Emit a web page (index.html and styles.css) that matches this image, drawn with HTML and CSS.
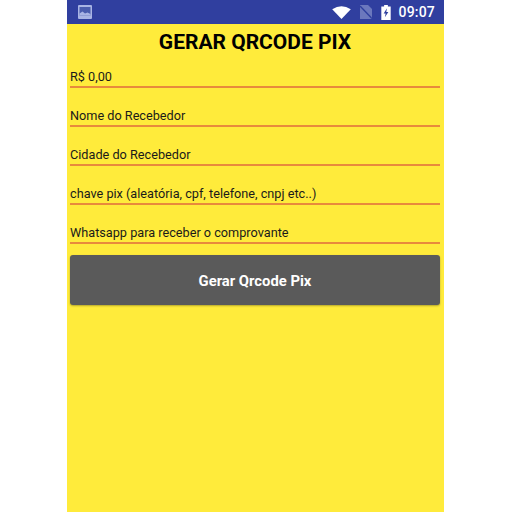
FILE: index.html
```html
<!DOCTYPE html>
<html lang="pt">
<head>
<meta charset="utf-8">
<title>Gerar Qrcode Pix</title>
<link rel="stylesheet" href="styles.css">
</head>
<body>
<div class="phone">
  <div class="status">
    <svg class="pic" viewBox="0 0 14 14"><rect x="0" y="0" width="14" height="14" rx="1" fill="#a9b4e4"/><rect x="1.5" y="2" width="11" height="8.5" fill="#4a5cae"/><path d="M1.5 10.5 L1.5 8.5 L4.5 6.5 L7 8.5 L9.5 7.5 L12.5 9 L12.5 10.5 Z" fill="#a9b4e4"/></svg>
    <div class="status-right">
      <svg class="wifi" viewBox="0 0 20 14"><path d="M0 3.5 Q10 -3 20 3.5 L10 14 Z" fill="#fff"/></svg>
      <svg class="sim" viewBox="0 0 12 14"><path d="M0 0 H8 L12 4 V14 H0 Z" fill="#6b78bd"/><path d="M0 1 L12 13.5" stroke="#2e3f9e" stroke-width="1.4"/></svg>
      <svg class="batt" viewBox="0 0 10 16"><path d="M3 0 H7 V1.5 H10 V16 H0 V1.5 H3 Z" fill="#fff"/><path d="M6 3.5 L2.5 9 H4.6 L3.8 13 L7.5 7.5 H5.3 Z" fill="#2e3f9e"/></svg>
      <span class="time">09:07</span>
    </div>
  </div>
  <main class="form">
    <h1 class="title">GERAR QRCODE PIX</h1>
    <div class="field first">R$ 0,00</div>
    <div class="field">Nome do Recebedor</div>
    <div class="field">Cidade do Recebedor</div>
    <div class="field">chave pix (aleatória, cpf, telefone, cnpj etc..)</div>
    <div class="field">Whatsapp para receber o comprovante</div>
    <button class="submit" type="button">Gerar Qrcode Pix</button>
  </main>
</div>
</body>
</html>
```
FILE: styles.css
```css
html, body {
  margin: 0;
  height: 100%;
  background: #fff;
}
body {
  font-family: Roboto, "Liberation Sans", sans-serif;
}
.phone {
  width: 377px;
  height: 512px;
  margin-left: 67px;
  background: #ffeb3b;
  display: flex;
  flex-direction: column;
}
.status {
  height: 24px;
  background: #303f9f;
  display: flex;
  align-items: center;
  justify-content: space-between;
  padding: 0 9px 0 11px;
  flex: none;
}
.pic {
  width: 14px;
  height: 14px;
}
.status-right {
  display: flex;
  align-items: center;
}
.wifi {
  width: 19px;
  height: 13px;
  margin-right: 9px;
}
.sim {
  width: 12px;
  height: 14px;
  margin-right: 9px;
}
.batt {
  width: 10px;
  height: 15px;
  margin-right: 7px;
}
.time {
  color: #fff;
  font-size: 14px;
  font-weight: 500;
  letter-spacing: 0.2px;
}
.form {
  padding: 0 4px 0 3px;
  display: flex;
  flex-direction: column;
}
.title {
  margin: 0;
  height: 36px;
  line-height: 36px;
  text-align: center;
  font-size: 21px;
  font-weight: 700;
  color: #000;
}
.field {
  height: 22px;
  border-bottom: 2px solid #e88a3c;
  font-size: 12.7px;
  color: #1a1a1a;
  display: flex;
  align-items: flex-end;
  line-height: 18px;
  margin-top: 15px;
}
.field.first {
  margin-top: 4px;
}
.submit {
  margin-top: 11px;
  height: 50px;
  border: 0;
  border-radius: 3px;
  padding: 2px 0 0;
  background: #5a5a5a;
  color: #fff;
  font-family: inherit;
  font-size: 14.8px;
  font-weight: 700;
  box-shadow: 0 1px 2px rgba(0,0,0,0.3);
}
```
